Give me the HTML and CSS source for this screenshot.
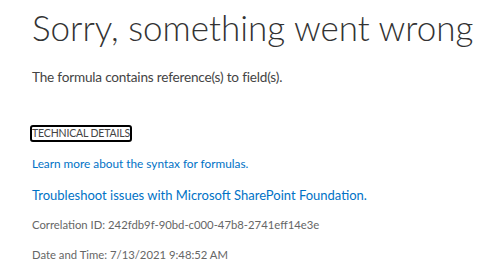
FILE: index.html
```html
<!DOCTYPE html>
<html lang="en">
<head>
<meta charset="utf-8">
<title>Error</title>
<link rel="stylesheet" href="styles.css">
</head>
<body>
<div class="page">
  <h1 class="title">Sorry, something went wrong</h1>
  <p class="message">The formula contains reference(s) to field(s).</p>
  <div class="details"><span class="details-toggle">TECHNICAL DETAILS</span></div>
  <p class="help"><a class="link" href="#">Learn more about the syntax for formulas.</a></p>
  <p class="trouble"><a class="link" href="#">Troubleshoot issues with Microsoft SharePoint Foundation.</a></p>
  <p class="meta">Correlation ID: 242fdb9f-90bd-c000-47b8-2741eff14e3e</p>
  <p class="meta">Date and Time: 7/13/2021 9:48:52 AM</p>
</div>
</body>
</html>
```
FILE: styles.css
```css
html, body {
  margin: 0;
  padding: 0;
  background: #ffffff;
}
.page {
  padding: 4px 0 0 32px;
  font-family: "Lato", "Open Sans", sans-serif;
  color: #444444;
}
.title {
  margin: 0;
  font-size: 35px;
  font-weight: 300;
  line-height: 46px;
  color: #333333;
  white-space: nowrap;
}
.message {
  margin: 18px 0 0;
  font-size: 13.6px;
  letter-spacing: -0.2px;
  line-height: 18px;
  color: #444444;
}
.details {
  margin-top: 39px;
  line-height: 0;
}
.details-toggle {
  display: inline-block;
  font-size: 10.5px;
  letter-spacing: -0.15px;
  line-height: 13px;
  color: #444444;
  border: 2px solid #000000;
  border-radius: 3px;
  padding: 0;
  margin-left: -2px;
}
.help {
  margin: 14px 0 0;
  font-size: 11.8px;
  line-height: 16px;
}
.trouble {
  margin: 14px 0 0;
  font-size: 13px;
  line-height: 18px;
}
.link {
  color: #0072c6;
  text-decoration: none;
}
.meta {
  margin: 12px 0 0;
  font-size: 11.3px;
  line-height: 18px;
  color: #666666;
}
```
